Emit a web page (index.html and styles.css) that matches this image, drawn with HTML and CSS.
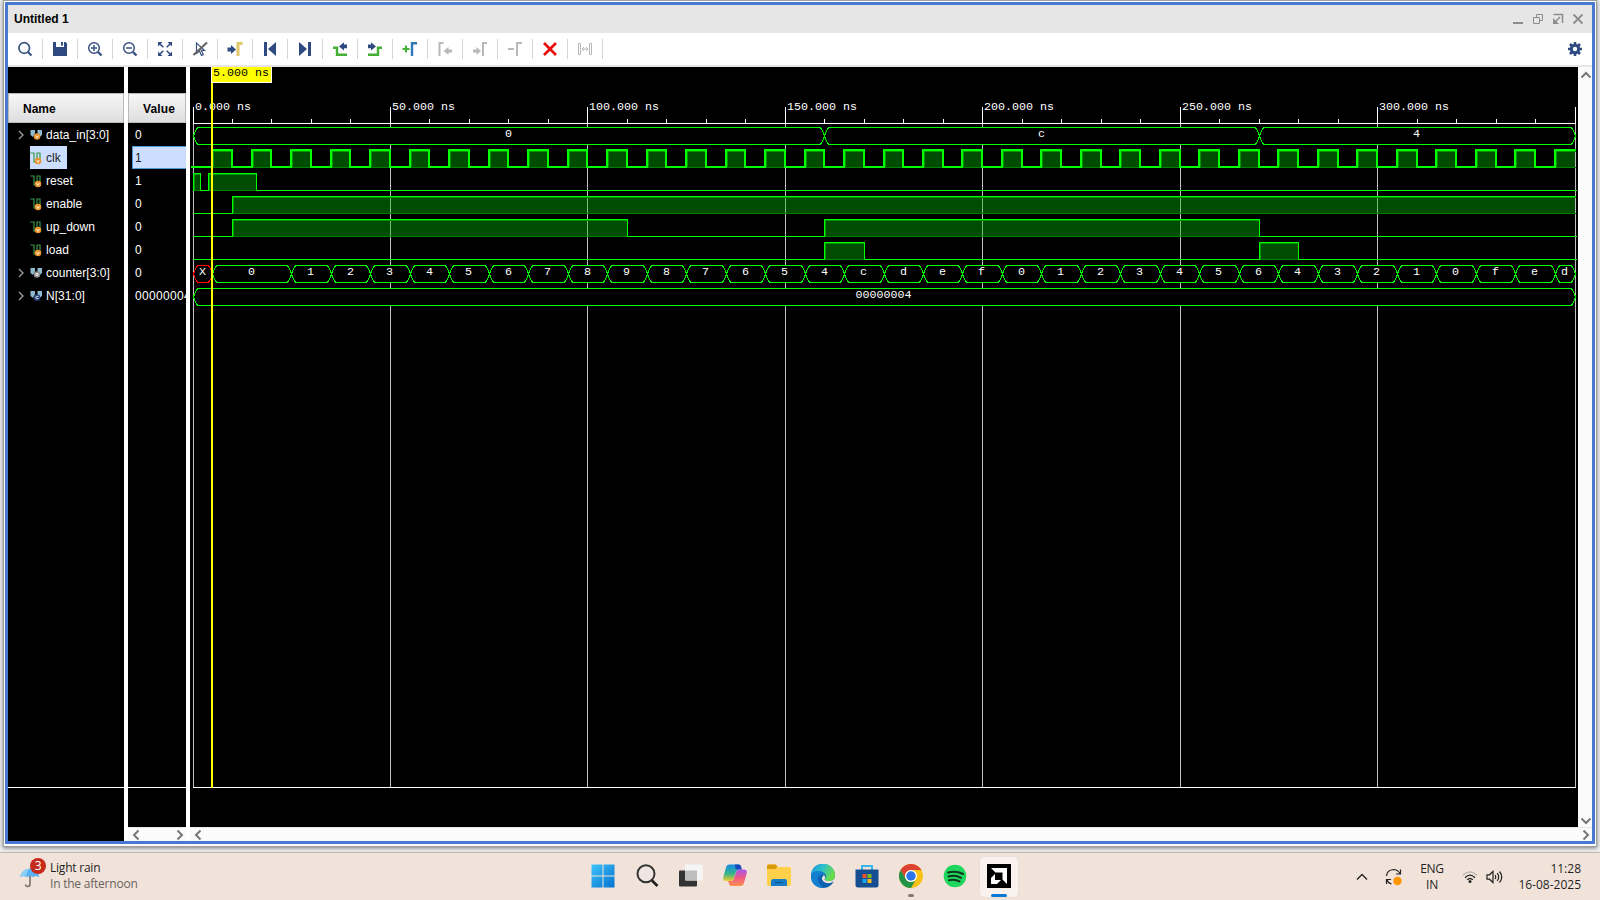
FILE: index.html
```html
<!DOCTYPE html>
<html lang="en">
<head>
<meta charset="utf-8">
<title>Untitled 1</title>
<link rel="stylesheet" href="styles.css">
</head>
<body>
<main class="desk">
<section class="window">
  <header class="titlebar">
    <span>Untitled 1</span>
    <div class="wincontrols">
      <svg width="12" height="12" viewBox="0 0 12 12"><path d="M1 10h10" stroke="#8c8c8c" stroke-width="2" fill="none"/></svg>
      <svg width="12" height="12" viewBox="0 0 12 12"><path d="M4.500 4V1.500h6v6H8M1.500 4.500h6v6h-6z" stroke="#8c8c8c" fill="none"/></svg>
      <svg width="12" height="12" viewBox="0 0 12 12"><path d="M1.500 1.500h9V10M3 9l5-5" stroke="#8c8c8c" stroke-width="1.500" fill="none"/><path d="M1 5v6h6z" fill="#8c8c8c"/></svg>
      <svg width="12" height="12" viewBox="0 0 12 12"><path d="M1.500 1.500l9 9M10.500 1.500l-9 9" stroke="#8c8c8c" stroke-width="1.800" fill="none"/></svg>
    </div>
  </header>
  <nav class="toolbar">
    <i class="tool"><svg viewBox="0 0 16 16"><circle cx="7.200" cy="7" r="5.300" fill="none" stroke="#385281" stroke-width="1.700"/><path d="M11 11l3.500 3.500" stroke="#385281" stroke-width="2.200"/></svg></i>
    <i class="tool"><svg viewBox="0 0 16 16"><path d="M1 1h3v5h8V1h1.500L15 2.500V15H1z" fill="#2f4a80"/><path d="M9 1h2v3.500H9z" fill="#2f4a80"/></svg></i>
    <i class="tool"><svg viewBox="0 0 16 16"><circle cx="7" cy="7" r="5.300" fill="none" stroke="#385281" stroke-width="1.500"/><path d="M11 11l3.500 3.500" stroke="#385281" stroke-width="2.400"/><path d="M4 7h6M7 4v6" stroke="#385281" stroke-width="1.500"/></svg></i>
    <i class="tool"><svg viewBox="0 0 16 16"><circle cx="7" cy="7" r="5.300" fill="none" stroke="#385281" stroke-width="1.500"/><path d="M11 11l3.500 3.500" stroke="#385281" stroke-width="2.400"/><path d="M4 7h6" stroke="#385281" stroke-width="1.500"/></svg></i>
    <i class="tool"><svg viewBox="0 0 16 16"><path d="M1 1h4.500L1 5.500zM15 1v4.500L10.500 1zM1 15v-4.500L5.500 15zM15 15h-4.500l4.500-4.500z" fill="#2f4a80"/><path d="M3 3l3.300 3.300M13 3L9.700 6.300M3 13l3.300-3.300M13 13L9.700 9.700" stroke="#2f4a80" stroke-width="1.500"/></svg></i>
    <i class="tool"><svg viewBox="0 0 16 16"><path d="M4.500 2v10.500l3-2.500 2 4.500 1.800-.8-2-4.300h3.200z" fill="#fff" stroke="#385281" stroke-width="1.200"/><path d="M1.500 14L15 1.500" stroke="#666" stroke-width="2.200"/></svg></i>
    <i class="tool"><svg viewBox="0 0 16 16"><path d="M.5 6.500H4V4l5 4.500L4 13v-2.500H.5z" fill="#2f4a80"/><path d="M11 15V2.500h4.500" fill="none" stroke="#e0c86a" stroke-width="3"/></svg></i>
    <i class="tool"><svg viewBox="0 0 16 16"><path d="M2 1h3v14H2zM14 1v14L6 8z" fill="#2f4a80"/></svg></i>
    <i class="tool"><svg viewBox="0 0 16 16"><path d="M11 1h3v14h-3zM2 1v14l8-7z" fill="#2f4a80"/></svg></i>
    <i class="tool"><svg viewBox="0 0 16 16"><path d="M1 6.800h4v7h10" fill="none" stroke="#43b035" stroke-width="2.400"/><path d="M15 3.500h-3V1.300L7 5.500l5 4V7.300h3z" fill="#2f4a80"/></svg></i>
    <i class="tool"><svg viewBox="0 0 16 16"><path d="M15 6.800h-4v7H1" fill="none" stroke="#43b035" stroke-width="2.400"/><path d="M1 3.500h3V1.300l5 4.200-5 4V7.300H1z" fill="#2f4a80"/></svg></i>
    <i class="tool"><svg viewBox="0 0 16 16"><path d="M.5 8h7M4 4.500v7" stroke="#43b035" stroke-width="2"/><path d="M10 15V2.200h5" fill="none" stroke="#2d79b5" stroke-width="2.400"/></svg></i>
    <i class="tool"><svg viewBox="0 0 16 16"><path d="M2.500 15V2h4" fill="none" stroke="#b8b8b8" stroke-width="2"/><path d="M15 8.500h-3.500V6l-5 4 5 4v-2.500H15z" fill="#b8b8b8"/></svg></i>
    <i class="tool"><svg viewBox="0 0 16 16"><path d="M11 15V2h4" fill="none" stroke="#b8b8b8" stroke-width="2"/><path d="M1 8.500h3.500V6l4.500 4-4.500 4v-2.500H1z" fill="#b8b8b8"/></svg></i>
    <i class="tool"><svg viewBox="0 0 16 16"><path d="M1 8h6M10 15V2h5" fill="none" stroke="#b8b8b8" stroke-width="2"/></svg></i>
    <i class="tool"><svg viewBox="0 0 16 16"><path d="M2 2l12 12M14 2L2 14" stroke="#ea0a0a" stroke-width="2.700"/></svg></i>
    <i class="tool"><svg viewBox="0 0 16 16"><path d="M1.500 2.500h2v11h-2zM12.500 2.500h2v11h-2zM5 8h6M7 6L5 8l2 2M9 6l2 2-2 2" fill="none" stroke="#b8b8b8"/></svg></i>
    <i class="gear"><svg viewBox="0 0 16 16"><path d="M8 1v14M1 8h14M3 3l10 10M13 3L3 13" stroke="#2f4a80" stroke-width="2.600"/><circle cx="8" cy="8" r="3.700" fill="#fff" stroke="#2f4a80" stroke-width="3"/></svg></i>
  </nav>
  <div class="content">
    <div class="names">
      <div class="spacer"></div>
      <div class="head name-head">Name</div>
      <div class="rows" id="names"></div>
      <div class="below"></div>
    </div>
    <div class="values">
      <div class="spacer"></div>
      <div class="head value-head">Value</div>
      <div class="rows" id="values"></div>
      <div class="below"></div>
      <div class="hscroll">
        <svg width="8" height="12" viewBox="0 0 8 12"><path d="M6.500 1.500L2 6l4.500 4.500"/></svg>
        <svg width="8" height="12" viewBox="0 0 8 12"><path d="M1.500 1.500L6 6l-4.500 4.500"/></svg>
      </div>
    </div>
    <div class="waves">
      <div class="wave-main">
        <svg id="wave" width="1388" height="760" viewBox="190 67 1388 760"></svg>
        <div class="vscroll">
          <svg width="12" height="8" viewBox="0 0 12 8"><path d="M1.500 6.500L6 2l4.500 4.500"/></svg>
          <svg width="12" height="8" viewBox="0 0 12 8"><path d="M1.500 1.500L6 6l4.500-4.500"/></svg>
        </div>
      </div>
      <div class="hscroll">
        <svg width="8" height="12" viewBox="0 0 8 12"><path d="M6.500 1.500L2 6l4.500 4.500"/></svg>
        <svg width="8" height="12" viewBox="0 0 8 12"><path d="M1.500 1.500L6 6l-4.500 4.500"/></svg>
      </div>
    </div>
  </div>
</section>
</main>
<footer class="taskbar">
  <div class="weather">
    <svg width="30" height="34" viewBox="0 0 30 34">
      <path d="M11 15v12q0 2.500-2.200 2.500T6.500 27.500" fill="none" stroke="#77716d" stroke-width="1.600"/>
      <path d="M1 20q2-8 10-8.500 8 .5 9.500 8.500l-3.500-1-3 1-3-1-3 1-3.500-1z" fill="#58b1f2"/>
      <path d="M1 20q2-8 10-8.500Q7 15 7.500 20l-3-1z" fill="#8dccf7"/>
      <circle cx="19" cy="9" r="8" fill="#c42b1c"/>
      <text x="19.300" y="13.300" class="badge-num">3</text>
    </svg>
    <div class="weather-text"><span class="w1">Light rain</span><span class="w2">In the afternoon</span></div>
  </div>
  <div class="apps">
    <i class="app"><svg viewBox="0 0 24 24"><defs><linearGradient id="win" x1="0" y1="0" x2="1" y2="1"><stop offset="0" stop-color="#3fc3fa"/><stop offset="1" stop-color="#0471cf"/></linearGradient></defs><path d="M.5.500h11v11h-11zM12.500.500h11v11h-11zM.5 12.500h11v11h-11zM12.500 12.500h11v11h-11z" fill="url(#win)"/></svg></i>
    <i class="app"><svg viewBox="0 0 24 24"><circle cx="11" cy="9.800" r="8.500" fill="#efe6e1" stroke="#333" stroke-width="2"/><path d="M17 16.500l5.500 5.500" stroke="#222" stroke-width="2.700"/></svg></i>
    <i class="app"><svg viewBox="0 0 24 24"><rect x="0" y="6.500" width="18" height="16" rx="1" fill="#333"/><rect x="6" y=".5" width="18" height="16" rx="1" fill="#f5f5f5"/><path d="M6 6.500h12v10H7l-1-1z" fill="#bdbdbd"/></svg></i>
    <i class="app"><svg viewBox="0 0 24 24"><defs><linearGradient id="cpa" x1="0" y1="0" x2="0" y2="1"><stop offset="0" stop-color="#168ce5"/><stop offset=".55" stop-color="#35b38c"/><stop offset="1" stop-color="#efce2a"/></linearGradient><linearGradient id="cpb" x1="0" y1="0" x2="0" y2="1"><stop offset="0" stop-color="#a656ec"/><stop offset=".5" stop-color="#ef5a86"/><stop offset="1" stop-color="#fb914c"/></linearGradient></defs><path d="M6.500.5h9q2 0 2.500 2l.7 3h-3q-2 0-2.700 2.500L11 14q-.7 3-3.500 3H3q-3.500 0-2.700-4L3 3.500q.8-3 3.500-3z" fill="url(#cpa)"/><path d="M12 .5h3.500q2 0 2.500 2l.7 3H15q-2 0-2.500-1z" fill="#1649bc"/><path d="M17.500 22h-9q-2 0-2.500-2l-.7-3h3q2 0 2.700-2.500l2-6q.7-3 3.500-3H21q3.500 0 2.700 4L21 19q-.8 3-3.500 3z" fill="url(#cpb)"/></svg></i>
    <i class="app"><svg viewBox="0 0 24 24"><path d="M0 2q0-1.500 1.500-1.500h7L11 3h11.500Q24 3 24 4.500V20q0 2-2 2H2q-2 0-2-2z" fill="#ffd04a"/><path d="M0 5V2Q0 .5 1.500.5h7L10.500 2.500 8.500 5z" fill="#d99a0a"/><path d="M4 22v-5q0-2 2-2h12q2 0 2 2v5z" fill="#167cc7"/><path d="M8 18.500h8" stroke="#0b5690" stroke-width="1.200"/></svg></i>
    <i class="app"><svg viewBox="0 0 24 24"><defs><linearGradient id="edg" x1="0" y1="0" x2="1" y2=".4"><stop offset="0" stop-color="#1595dd"/><stop offset=".5" stop-color="#2dc0cc"/><stop offset="1" stop-color="#69dc45"/></linearGradient></defs><circle cx="12" cy="12" r="12" fill="#0c62b0"/><path d="M0 12A12 12 0 0 1 24 11q0 6-5.500 6-5 0-5-2 2.500-2 .5-5.200Q11 6.500 6 8 1 9.500 0 12z" fill="url(#edg)"/><path d="M0 12q.5-5 7-5 6 0 7 5-3-3-6 0-2.500 3 0 7 1 2 4 5Q0 23 0 12z" fill="#1680d0"/><path d="M13 11q-4 3-.5 6.500 4 3.500 11-.2l1-1.300L24 13q-1 4-5.500 4-5 0-5-2 1.500-2-.5-4z" fill="#f1e3da"/></svg></i>
    <i class="app"><svg viewBox="0 0 24 24"><path d="M7 6V2h10v4" fill="none" stroke="#34b7ed" stroke-width="2"/><path d="M.5 5.500h23V21q0 2.500-2.500 2.500H3Q.5 23.500.5 21z" fill="#164f91"/><path d="M7.500 10h4v4h-4z" fill="#f0502c"/><path d="M12.500 10h4v4h-4z" fill="#80bc19"/><path d="M7.500 15h4v4h-4z" fill="#15a6ef"/><path d="M12.500 15h4v4h-4z" fill="#fbb916"/></svg></i>
    <i class="app"><svg viewBox="0 0 24 24"><circle cx="12" cy="12" r="12" fill="#fbc116"/><path d="M1.600 6A12 12 0 0 1 22.400 6H12a6 6 0 0 0-5.200 9z" fill="#dc4132"/><path d="M1.600 6A12 12 0 0 0 12 24l5.200-9a6 6 0 0 1-10.400 0z" fill="#239447"/><circle cx="12" cy="12" r="6" fill="#fff"/><circle cx="12" cy="12" r="4.700" fill="#2c72e8"/></svg><b class="dot"></b></i>
    <i class="app"><svg viewBox="0 0 24 24"><circle cx="12" cy="12" r="11.300" fill="#1fd65e"/><path d="M5 8.500q8-2.300 15 1.500M5.500 12.500q7-2 12.500 1.300M6 16.200q6-1.500 10.500 1.200" fill="none" stroke="#10351e" stroke-width="2" stroke-linecap="round"/></svg></i>
    <i class="app active"><svg viewBox="0 0 24 24"><path d="M0 0h24v24H0z" fill="#000"/><path d="M4 4h16v16l-4.500-4.500v-7h-7z" fill="#fff"/><path d="M8 10v6h6l-4 4H4v-6z" fill="#fff"/></svg><b class="bar"></b></i>
  </div>
  <div class="tray">
    <svg class="chev" width="12" height="8" viewBox="0 0 12 8"><path d="M1 6.500L6 1.500l5 5" fill="none" stroke="#222" stroke-width="1.300"/></svg>
    <svg class="sync" width="18" height="18" viewBox="0 0 18 18"><path d="M1.500 8Q2 2 8.500 1.500q4 0 6.500 4M15.500 1.500v4.500h-4.500M6.500 16Q3 15 2 12M1.500 16v-4.500H6" fill="none" stroke="#222" stroke-width="1.200"/><circle cx="12.500" cy="13" r="4.200" fill="#ff9500"/></svg>
    <div class="lang"><span>ENG</span><span>IN</span></div>
    <svg class="wifi" width="16" height="14" viewBox="0 0 16 14"><path d="M.8 5.300q7.200-7 14.400 0" fill="none" stroke="#b9aea8" stroke-width="1.200"/><path d="M3 7.700q5-5 10 0M5.200 9.800q2.800-2.700 5.600 0" fill="none" stroke="#222" stroke-width="1.300"/><circle cx="8" cy="11.500" r="1.500" fill="#222"/></svg>
    <svg class="vol" width="17" height="14" viewBox="0 0 17 14"><path d="M1 4.800h2.500L7 1.500v11L3.500 9.200H1zM9 5q1.500 2 0 4M11.200 3.200q3 3.800 0 7.600M13.500 1.500q4.500 5.500 0 11" fill="none" stroke="#222" stroke-width="1.200"/></svg>
    <div class="clock"><span>11:28</span><span class="date">16-08-2025</span></div>
  </div>
</footer>
<script src="wave.js"></script>
</body>
</html>
```
FILE: styles.css
```css
* { box-sizing: border-box; }
body {
  margin: 0;
  width: 1600px;
  height: 900px;
  overflow: hidden;
  display: flex;
  flex-direction: column;
  font-family: "Liberation Sans", Arial, sans-serif;
  font-size: 12px;
}
svg { display: block; flex: none; }
.desk { height: 852px; padding: 0 3px; background: #eeeeee; }
.window {
  height: 847px;
  border: 1px solid #a0a0a0;
  padding: 1px 1px 2px;
  background: #fff;
  box-shadow: 0 1px 4px #777;
}
.titlebar {
  height: 31px;
  border: 3px solid #487bcf;
  border-bottom: 0;
  background: #e6e6e6;
  display: flex;
  align-items: center;
  justify-content: space-between;
  padding: 0 8px 0 6px;
  font-weight: bold;
}
.wincontrols { display: flex; gap: 8px; }
.toolbar {
  height: 34px;
  border: solid #487bcf;
  border-width: 0 3px;
  display: flex;
  align-items: center;
  background: linear-gradient(#fff 32px, #e6e6e9 32px);
  padding-bottom: 2px;
}
.tool {
  width: 35px;
  height: 20px;
  border-right: 1px solid #d4d4d4;
  display: grid;
  place-items: center;
}
.tool svg, .gear svg { width: 16px; height: 16px; }
.gear { margin-left: auto; margin-right: 9px; }
.content {
  height: 777px;
  border: 3px solid #487bcf;
  border-top: 0;
  display: grid;
  grid-template-columns: 116px 58px 1402px;
  column-gap: 4px;
  background: #fff;
}
.names, .values { background: #000; display: flex; flex-direction: column; overflow: hidden; color: #fff; }
.spacer { height: 26px; flex: none; }
.head {
  height: 30px;
  flex: none;
  border: 1px solid #b9b9b9;
  background: linear-gradient(#f6f6f6, #dedee0);
  color: #000;
  font-weight: bold;
  line-height: 31px;
}
.name-head, .value-head { padding-left: 14px; }
.value-head { letter-spacing: 0.15px; }
.rows { height: 665px; flex: none; border-bottom: 1px solid #fff; }
.below { flex: 1; }
.row { height: 23px; display: flex; align-items: center; white-space: nowrap; }
.names .row { padding-left: 10px; letter-spacing: 0.04px; }
.row .arrow { width: 12px; }
.row .label { height: 23px; display: flex; align-items: center; gap: 3px; padding-right: 6px; }
.row .label svg { margin-right: 1px; }
.values .row { padding-left: 7px; letter-spacing: 0.33px; }
.names .selected .label { background: #ccdeff; color: #1c1c1c; }
.values .selected {
  margin-left: 4px;
  padding-left: 2px;
  background: #ccdeff;
  border: 1px solid #4a9ad8;
  border-right: 0;
  color: #1c1c1c;
}
.waves { display: flex; flex-direction: column; }
.wave-main { display: flex; height: 760px; background: #000; }
.hscroll {
  height: 14px;
  flex: none;
  display: flex;
  align-items: center;
  justify-content: space-between;
  padding: 1px 2px 0 4px;
  background: #fbfbfb;
  border-top: 1px solid #e8e8e8;
}
.vscroll {
  width: 14px;
  display: flex;
  flex-direction: column;
  align-items: center;
  justify-content: space-between;
  padding: 4px 0 2px 1px;
  background: #fbfbfb;
}
.hscroll path, .vscroll path { fill: none; stroke: #777; stroke-width: 2; }
#wave { shape-rendering: crispEdges; background: #000; }
#wave text { font: 10.8px "Courier New", "Liberation Mono", monospace; fill: #fff; }
#wave .mid { text-anchor: middle; }
#wave .cursor-label { fill: #000; }
.taskbar {
  height: 48px;
  border-top: 1px solid #bdb5b1;
  background: #f1e3da;
  display: grid;
  grid-template-columns: 578px 1fr 260px;
  font-family: "Open Sans", "Noto Sans", sans-serif;
  color: #1f1f1f;
}
.weather { display: flex; padding: 4px 0 0 19px; }
.badge-num { font-size: 12px; fill: #fff; text-anchor: middle; }
.weather-text { display: flex; flex-direction: column; padding: 3px 0 0 1px; font-size: 12px; line-height: 16px; letter-spacing: -0.22px; }
.w2 { color: #69625e; }
.apps { display: flex; align-items: center; gap: 2px; padding-left: 4px; }
.app { width: 42px; height: 40px; display: grid; place-items: center; position: relative; }
.app svg { width: 24px; height: 24px; margin-top: -1px; }
.app.active { background: #faf2ee; border-radius: 4px; width: 38px; margin-left: 2px; box-shadow: 0 0 1px #c9bdb6; }
.dot { position: absolute; bottom: 0; left: 18px; width: 6px; height: 3px; border-radius: 2px; background: #85796f; }
.bar { position: absolute; bottom: 0; left: 11px; width: 16px; height: 3px; border-radius: 2px; background: #0879d6; }
.tray { display: flex; align-items: center; font-size: 12px; }
.chev { margin-left: 16px; }
.sync { margin-left: 17px; }
.lang { width: 42px; margin-left: 8px; text-align: center; letter-spacing: -0.3px; }
.lang span, .clock span { display: block; line-height: 16px; }
.wifi { margin-left: 9px; }
.vol { margin-left: 8px; }
.clock { margin-left: auto; margin-right: 19px; text-align: right; letter-spacing: 0; }
```
FILE: wave.js
```js
const X0 = 193, SCALE = 1382 / 350, END = 350, LIME = '#00ff00';
const px = t => Math.floor(X0 + t * SCALE);
const signals = [
  { name: 'data_in[3:0]', value: '0', kind: 'in', bus: [[0, '0'], [160, 'c'], [270, '4']] },
  { name: 'clk', value: '1', selected: true, high: Array.from({ length: 35 }, (_, i) => [5 + i * 10, 10 + i * 10]) },
  { name: 'reset', value: '1', high: [[0, 2], [4, 16]] },
  { name: 'enable', value: '0', high: [[10, 350]] },
  { name: 'up_down', value: '0', high: [[10, 110], [160, 270]] },
  { name: 'load', value: '0', high: [[160, 170], [270, 280]] },
  { name: 'counter[3:0]', value: '0', kind: 'out',
    bus: [[0, 'X'], [5, '0'], ...[...'123456789' + '87654cdef0123456' + '43210fed'].map((c, i) => [25 + i * 10, c])] },
  { name: 'N[31:0]', value: '00000004', kind: 'const', bus: [[0, '00000004']] }
];

function icon(s) {
  const ball = (c, m) => `<circle cx="7" cy="7.500" r="3.300" fill="${c}"/><path d="${m}" fill="none" stroke="#fff" stroke-width=".8"/>`;
  if (s.bus) {
    const tone = { in: '#e8942c', out: '#8c8c8c', const: '#2f4a80' }[s.kind];
    const mark = { in: 'M5.600 6.500l1.400 2.500 1.400-2.500', out: 'M6 6.500h2v2H6z', const: 'M8.300 6.500q-2.500-.5-2.500 1t2.500 1' }[s.kind];
    return `<svg width="12" height="12" viewBox="0 0 12 12"><path d="M.5 1H5v3L3 8 .5 6zM7.500 1H12v5L9.500 8 7.500 4z" fill="#8fb9cd"/>${ball(tone, mark)}</svg>`;
  }
  return `<svg width="12" height="14" viewBox="0 0 12 14"><path d="M.5 2H4v9h3V2h3v6" fill="none" stroke="#3b9648" stroke-width="1.200"/><g transform="translate(1 2.500)">${ball('#e8942c', 'M5.600 6.500l1.400 2.500 1.400-2.500')}</g></svg>`;
}

document.getElementById('names').innerHTML = signals.map(s =>
  `<div class="row${s.selected ? ' selected' : ''}"><span class="arrow">${s.bus ? '<svg width="7" height="10" viewBox="0 0 7 10"><path d="M1 1l4 4-4 4" fill="none" stroke="#999" stroke-width="1.400"/></svg>' : ''}</span><span class="label">${icon(s)}<span>${s.name}</span></span></div>`).join('');
document.getElementById('values').innerHTML = signals.map(s =>
  `<div class="row${s.selected ? ' selected' : ''}">${s.value}</div>`).join('');

const out = [];
const rect = (x, y, w, h, fill) => out.push(`<rect x="${x}" y="${y}" width="${w}" height="${h}" fill="${fill}"/>`);
// every character cell is 7px wide
const text = (x, y, t, cls = '') => out.push(`<text x="${x}" y="${y}" textLength="${t.length * 7}" lengthAdjust="spacingAndGlyphs" class="${cls}">${t}</text>`);

// grid and time ruler
for (let t = 0; t <= END; t += 50) rect(px(t), 124, 1, 664, '#c0c0c0');
for (let t = 0; t <= END; t += 10) {
  const major = t % 50 === 0;
  rect(px(t), major ? 107 : 119, 1, major ? 17 : 4, '#fff');
  if (major && t < END) text(px(t) + 2, 110, t + '.000 ns');
}
rect(X0, 123, 1383, 1, '#fff');
rect(X0, 787, 1383, 1, '#fff');

signals.forEach((s, i) => {
  const top = 127 + i * 23, low = top + 17;
  if (s.bus) {
    s.bus.forEach(([t, label], k) => {
      const a = px(t) + .5, b = px(k + 1 < s.bus.length ? s.bus[k + 1][0] : END) + .5;
      const color = label === 'X' ? '#ff0000' : LIME;
      out.push(`<path d="M${a} ${top + 9}L${a + 1} ${top + 6}L${a + 4} ${top + .5}H${b - 4}L${b - 1} ${top + 6}L${b} ${top + 9}L${b - 1} ${top + 12}L${b - 4} ${low + .5}H${a + 4}L${a + 1} ${top + 12}Z" fill="#000" stroke="${color}"/>`);
      text(Math.floor((a + b) / 2) - .5, top + 10, label, 'mid');
    });
    return;
  }
  const w = s.selected ? 2 : 1, o = w === 2 ? 0 : .5;
  const base = top + o, bottom = low + o;
  let d = '', prev = X0 - (w - 1);
  s.high.forEach(([a, b]) => {
    const xa = px(a), xb = px(b);
    rect(xa, top, xb - xa, 18, 'rgba(0,190,0,.4)');
    rect(xa + 1, top + 1, xb - xa, 1, '#009600');
    rect(xa + 1, top + 1, 1, 16, '#009600');
    rect(xa + 1, low, xb - xa, 1, '#008000');
    if (a > 0) d += `M${prev} ${bottom}H${xa + o}V${base}`;
    else d += `M${xa + o} ${bottom}V${base}`;
    d += `H${xb + o}` + (b < END ? `V${bottom}` : '');
    prev = xb;
  });
  if (s.high[s.high.length - 1][1] < END) d += `M${prev} ${bottom}H1576`;
  out.push(`<path d="${d}" fill="none" stroke="${LIME}" stroke-width="${w}" stroke-linecap="square"/>`);
});

// time cursor
rect(211, 67, 2, 721, '#ffff00');
rect(211, 67, 61, 16, '#fff');
rect(212, 67, 59, 15, '#ffff00');
text(213, 76, '5.000 ns', 'cursor-label');
document.getElementById('wave').innerHTML = out.join('');
```
